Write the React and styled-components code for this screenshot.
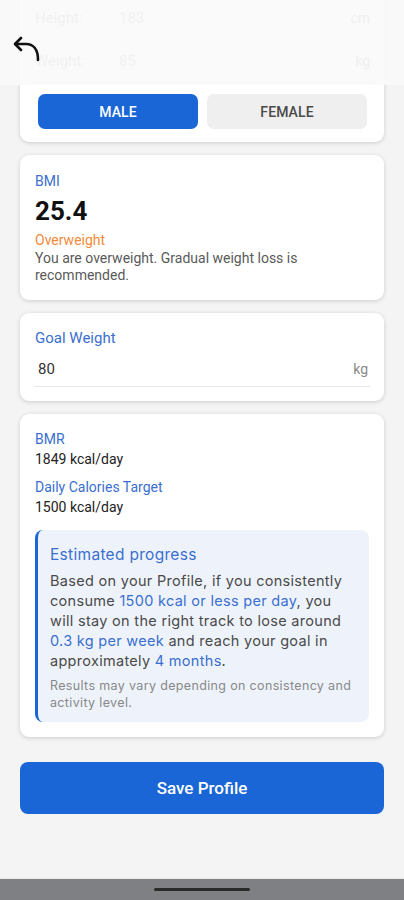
import React from 'react';
import styled, { createGlobalStyle } from 'styled-components';

const GlobalStyle = createGlobalStyle`
  html, body {
    margin: 0;
    padding: 0;
    background: #f4f4f4;
  }
  body {
    font-family: Roboto, "Noto Sans", Arial, sans-serif;
    -webkit-font-smoothing: antialiased;
  }
`;

const Screen = styled.div`
  position: relative;
  width: 404px;
  height: 900px;
  overflow: hidden;
  background: #f4f4f4;
  display: flex;
  flex-direction: column;
`;

const Header = styled.div`
  position: absolute;
  top: 0;
  left: 0;
  right: 0;
  height: 85px;
  background: rgba(250, 250, 250, 0.9);
  z-index: 2;
`;

const BackButton = styled.button`
  position: absolute;
  left: 11px;
  top: 33px;
  width: 34px;
  height: 32px;
  padding: 0;
  border: none;
  background: none;
`;

const Scroll = styled.div`
  flex: 1;
  display: flex;
  flex-direction: column;
  gap: 13px;
  padding: 0 20px;
  margin-top: -19px;
`;

const Card = styled.div`
  background: #fff;
  border-radius: 9px;
  box-shadow: 0 1px 4px rgba(0, 0, 0, 0.16);
  padding: ${p => p.$pad || '16px 15px'};
  display: flex;
  flex-direction: column;
`;

const FieldRow = styled.div`
  display: flex;
  align-items: center;
  height: 42px;
  border-bottom: 1px solid #ececec;
  font-size: 15px;
  color: #9a9a9a;
`;

const FieldLabel = styled.span`
  width: 84px;
`;

const FieldValue = styled.span`
  flex: 1;
  color: ${p => p.$dark ? '#333' : 'inherit'};
`;

const Unit = styled.span`
  color: #8a8a8a;
  font-size: 14px;
`;

const GenderRow = styled.div`
  display: grid;
  grid-template-columns: 1fr 1fr;
  gap: 9px;
  margin-top: 11px;
  padding: 0 3px;
`;

const GenderButton = styled.button`
  height: 35px;
  border: none;
  border-radius: 7px;
  font-family: Roboto, sans-serif;
  font-size: 14px;
  font-weight: 500;
  letter-spacing: 0.1px;
  background: ${p => p.$active ? '#1a66d6' : '#efefef'};
  color: ${p => p.$active ? '#fff' : '#4a4a4a'};
`;

const Label = styled.div`
  color: #3a6fcf;
  font-size: ${p => p.$size || 14}px;
  line-height: 20px;
`;

const BigValue = styled.div`
  font-size: 26px;
  font-weight: 700;
  color: #111;
  line-height: 32px;
  margin-top: 4px;
`;

const Status = styled.div`
  color: #f28a3a;
  font-size: 14px;
  line-height: 20px;
  margin-top: 3px;
`;

const Note = styled.div`
  color: #5a5a5a;
  font-size: 14px;
  line-height: 17px;
`;

const InputRow = styled.div`
  display: flex;
  align-items: center;
  height: 34px;
  margin-top: 4px;
  padding: 0 2px 0 3px;
  border-bottom: 1px solid #e6e6e6;
  font-size: 15px;
`;

const Value = styled.div`
  color: #222;
  font-size: 14px;
  line-height: 20px;
  margin-bottom: ${p => p.$gap || 0}px;
`;

const ProgressBox = styled.div`
  margin-top: 13px;
  background: #eef3fb;
  border-left: 3px solid #1a66d6;
  border-radius: 8px;
  padding: 15px 10px 11px 12px;
  font-family: Inter, "Noto Sans", sans-serif;
`;

const ProgressTitle = styled.div`
  color: #3a6fcf;
  font-size: 15.5px;
  letter-spacing: 0.3px;
  line-height: 20px;
`;

const ProgressText = styled.p`
  margin: 6px 0 0;
  color: #4a4a4a;
  font-size: 14.5px;
  letter-spacing: 0.3px;
  line-height: 20px;
`;

const Hi = styled.span`
  color: #3a6fcf;
`;

const Small = styled.p`
  margin: 6px 0 0;
  color: #888;
  font-size: 12.5px;
  letter-spacing: 0.35px;
  line-height: 17px;
`;

const SaveButton = styled.button`
  margin-top: 12px;
  height: 52px;
  width: 100%;
  border: none;
  border-radius: 8px;
  background: #1a66d6;
  color: #fff;
  font-family: Roboto, sans-serif;
  font-size: 17px;
  font-weight: 500;
  flex-shrink: 0;
`;

const NavBar = styled.div`
  height: 21px;
  background: #7e8083;
  border-top: 1px solid #e8e8e8;
  display: flex;
  justify-content: center;
  align-items: center;
  flex-shrink: 0;
`;

const Handle = styled.div`
  width: 96px;
  height: 3px;
  border-radius: 2px;
  background: #2a2a2a;
`;

const Spacer = styled.div`
  flex: 1;
`;

export default function App() {
  return (
    <>
      <GlobalStyle />
      <Screen>
        <Header>
          <BackButton>
            <svg width="34" height="32" viewBox="0 0 34 32" fill="none" stroke="#111" strokeWidth="2.6" strokeLinecap="round" strokeLinejoin="round">
              <path d="M4 11 L10 5 M4 11 L10 17" />
              <path d="M4.5 11 H15 C22 11 27 16 27 27" />
            </svg>
          </BackButton>
        </Header>
        <Scroll>
          <Card $pad="16px 14px 13px 15px">
            <FieldRow>
              <FieldLabel>Height:</FieldLabel>
              <FieldValue>183</FieldValue>
              <Unit>cm</Unit>
            </FieldRow>
            <FieldRow>
              <FieldLabel>Weight:</FieldLabel>
              <FieldValue>85</FieldValue>
              <Unit>kg</Unit>
            </FieldRow>
            <GenderRow>
              <GenderButton $active>MALE</GenderButton>
              <GenderButton>FEMALE</GenderButton>
            </GenderRow>
          </Card>

          <Card $pad="16px 15px 16px">
            <Label>BMI</Label>
            <BigValue>25.4</BigValue>
            <Status>Overweight</Status>
            <Note>You are overweight. Gradual weight loss is recommended.</Note>
          </Card>

          <Card $pad="15px 14px 14px 15px">
            <Label $size={15}>Goal Weight</Label>
            <InputRow>
              <FieldValue $dark>80</FieldValue>
              <Unit>kg</Unit>
            </InputRow>
          </Card>

          <Card $pad="15px 15px 15px">
            <Label>BMR</Label>
            <Value $gap={8}>1849 kcal/day</Value>
            <Label>Daily Calories Target</Label>
            <Value>1500 kcal/day</Value>
            <ProgressBox>
              <ProgressTitle>Estimated progress</ProgressTitle>
              <ProgressText>
                Based on your Profile, if you consistently consume <Hi>1500 kcal or less per day</Hi>, you will stay on the right track to lose around <Hi>0.3 kg per week</Hi> and reach your goal in approximately <Hi>4 months</Hi>.
              </ProgressText>
              <Small>Results may vary depending on consistency and activity level.</Small>
            </ProgressBox>
          </Card>

          <SaveButton>Save Profile</SaveButton>
          <Spacer />
        </Scroll>
        <NavBar>
          <Handle />
        </NavBar>
      </Screen>
    </>
  );
}
